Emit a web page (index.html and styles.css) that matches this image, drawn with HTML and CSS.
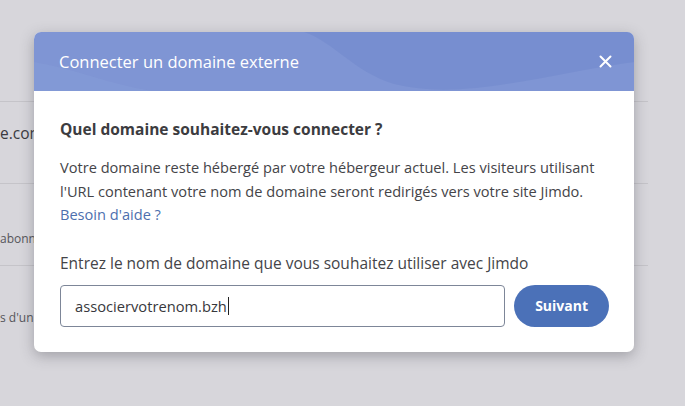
FILE: index.html
```html
<!DOCTYPE html>
<html lang="fr">
<head>
<meta charset="utf-8">
<title>Connecter un domaine externe</title>
<link rel="stylesheet" href="styles.css">
</head>
<body>
<div class="page">
  <div class="list">
    <div class="row row-first"><span class="cell cell-main">e.com</span></div>
    <div class="row row-second"><span class="cell cell-small">abonnement</span></div>
    <div class="row row-third"><span class="cell cell-small">s d'un domaine</span></div>
  </div>
</div>

<div class="modal" role="dialog" aria-labelledby="modal-title">
  <div class="modal-header">
    <svg class="wave" width="600" height="59" viewBox="0 0 600 59" preserveAspectRatio="none" aria-hidden="true">
      <path d="M270 0 C300 10 320 40 360 52 C430 70 520 40 600 30 L600 0 Z" fill="#7189cc" opacity="0.55"/>
      <path d="M0 30 C60 40 110 70 180 59 L0 59 Z" fill="#8aa0da" opacity="0.35"/>
    </svg>
    <h2 class="modal-title" id="modal-title">Connecter un domaine externe</h2>
    <button class="close" type="button" aria-label="Fermer">
      <svg width="13" height="13" viewBox="0 0 13 13"><path d="M1.5 1.5 L11.5 11.5 M11.5 1.5 L1.5 11.5" stroke="#fff" stroke-width="2" stroke-linecap="round"/></svg>
    </button>
  </div>
  <div class="modal-body">
    <h3 class="question">Quel domaine souhaitez-vous connecter ?</h3>
    <p class="desc">Votre domaine reste hébergé par votre hébergeur actuel. Les visiteurs utilisant l'URL contenant votre nom de domaine seront redirigés vers votre site Jimdo.<br><a class="help" href="#">Besoin d'aide ?</a></p>
    <label class="label" for="domain">Entrez le nom de domaine que vous souhaitez utiliser avec Jimdo</label>
    <div class="form-row">
      <div class="input"><span class="value">associervotrenom.bzh</span><span class="caret"></span></div>
      <button class="next" type="button">Suivant</button>
    </div>
  </div>
</div>
</body>
</html>
```

FILE: styles.css
```css
html, body {
  margin: 0;
  padding: 0;
}
body {
  width: 685px;
  height: 406px;
  overflow: hidden;
  background: #d7d6db;
  font-family: "Open Sans", Lato, sans-serif;
  position: relative;
}
.page {
  padding-top: 101px;
}
.list {
  width: 648px;
}
.row {
  border-top: 1px solid #c5c4c9;
  box-sizing: border-box;
  height: 82px;
}
.row-first { padding-top: 20px; }
.row-second { padding-top: 46px; }
.row-third { padding-top: 43px; }
.cell {
  display: block;
  white-space: nowrap;
  color: #55555a;
}
.cell-main {
  font-size: 15.5px;
  color: #3a3a40;
}
.cell-small {
  font-size: 12px;
}

.modal {
  position: absolute;
  left: 34px;
  top: 32px;
  width: 600px;
  height: 320px;
  background: #fff;
  border-radius: 7px;
  overflow: hidden;
  box-shadow: 0 4px 14px rgba(60, 60, 70, 0.35);
}
.modal-header {
  position: relative;
  height: 59px;
  background: #7f95d4;
  display: flex;
  align-items: center;
  justify-content: space-between;
  padding: 0 22px 0 25px;
}
.wave {
  position: absolute;
  left: 0;
  top: 0;
}
.modal-title {
  position: relative;
  margin: 0;
  font-size: 16.5px;
  font-weight: 400;
  color: #fff;
}
.close {
  position: relative;
  background: none;
  border: 0;
  padding: 0;
  width: 13px;
  height: 13px;
  display: flex;
}
.modal-body {
  padding: 27px 25px 0 26px;
  color: #444448;
}
.question {
  margin: 0;
  font-size: 15.5px;
  font-weight: 700;
  color: #3c3c40;
  line-height: 22px;
}
.desc {
  margin: 16px 0 0;
  font-size: 14.6px;
  line-height: 23.5px;
}
.help {
  color: #4d6fae;
  text-decoration: none;
}
.label {
  display: block;
  margin-top: 25px;
  font-size: 15.5px;
  line-height: 22px;
}
.form-row {
  display: flex;
  gap: 9px;
  margin-top: 11px;
}
.input {
  width: 446px;
  height: 42px;
  box-sizing: border-box;
  border: 1px solid #7d8698;
  border-radius: 4px;
  display: flex;
  align-items: center;
  padding-left: 14px;
  font-size: 14.7px;
  color: #38383c;
}
.caret {
  width: 1px;
  height: 18px;
  background: #222;
  margin-left: 1px;
}
.next {
  width: 95px;
  height: 42px;
  border: 0;
  border-radius: 21px;
  background: #4b71b8;
  color: #fff;
  font-family: "Open Sans", sans-serif;
  font-weight: 700;
  font-size: 14px;
}
```
